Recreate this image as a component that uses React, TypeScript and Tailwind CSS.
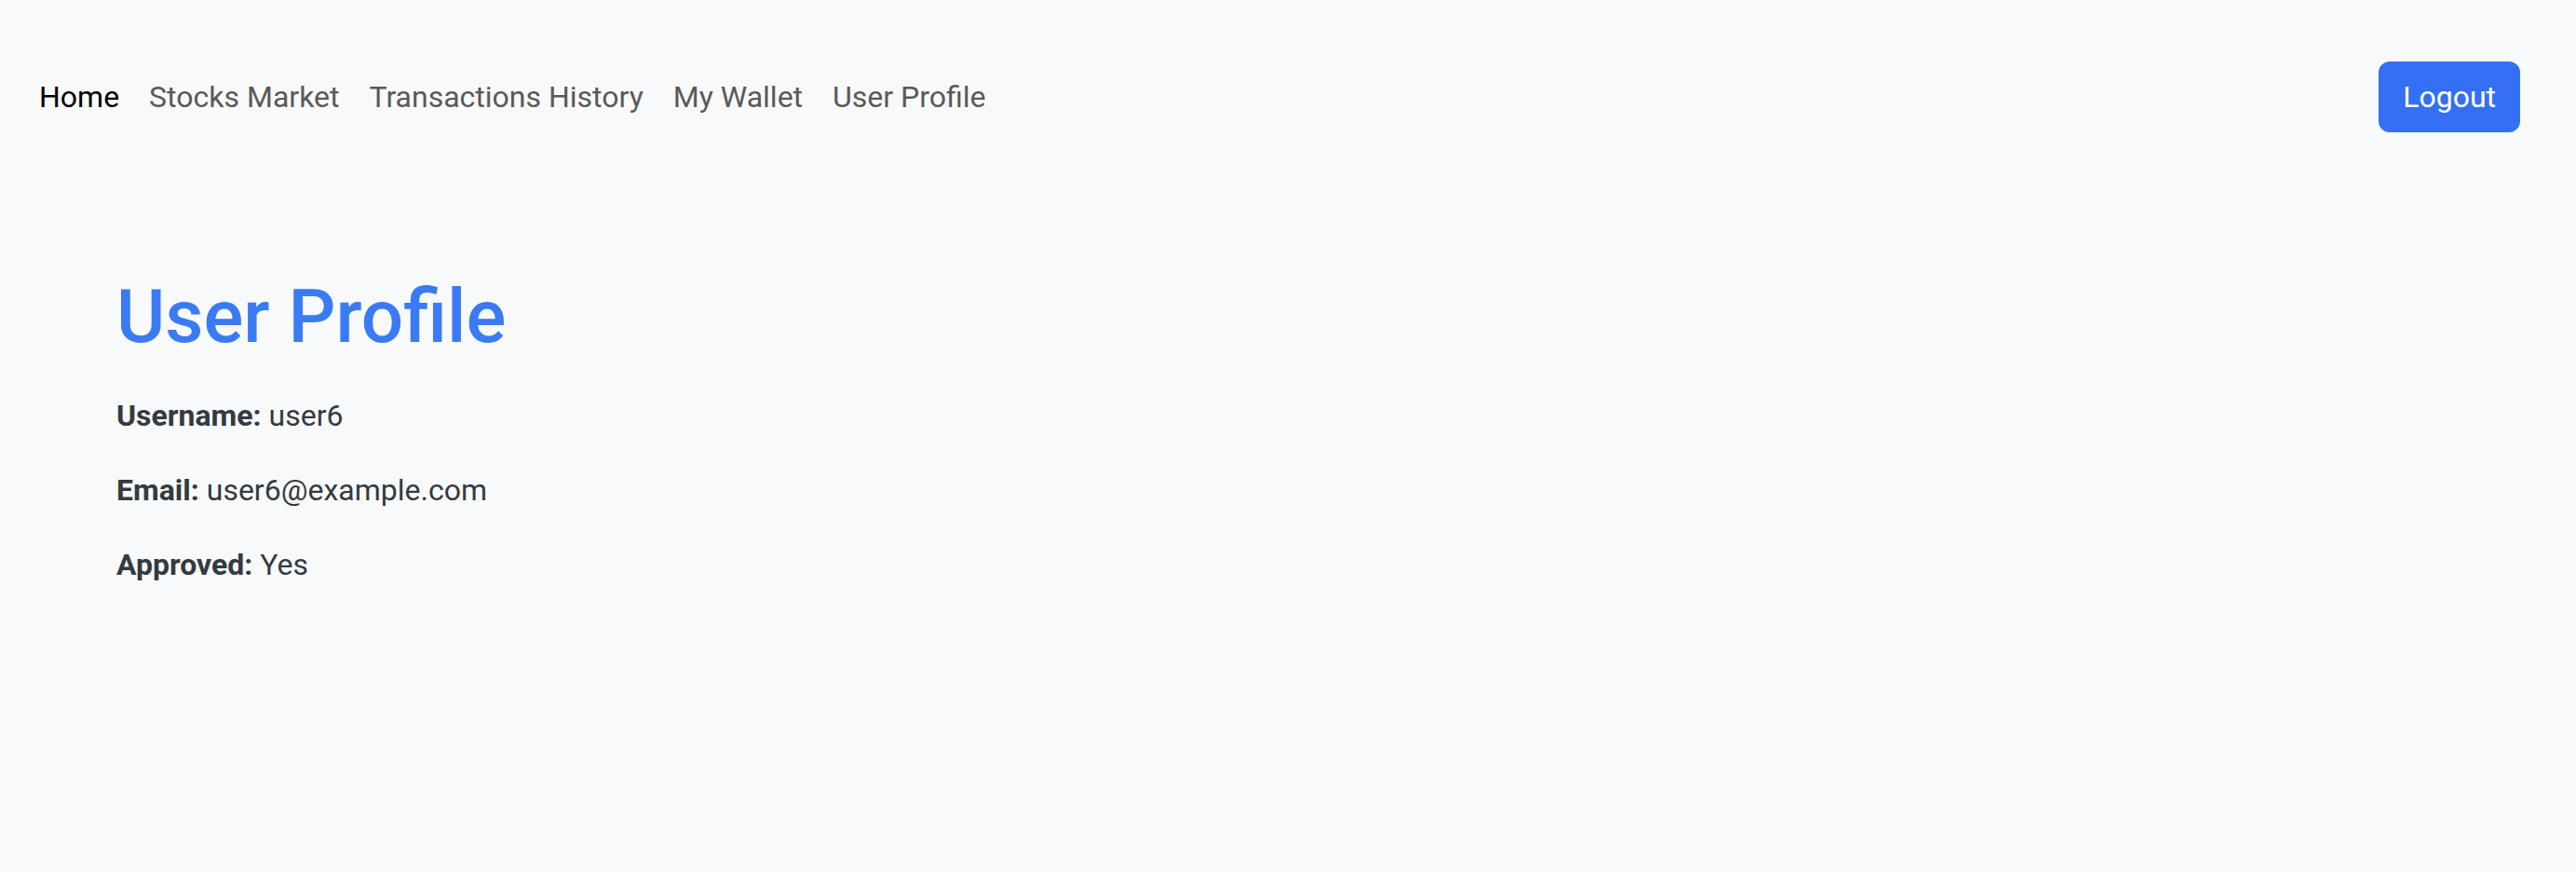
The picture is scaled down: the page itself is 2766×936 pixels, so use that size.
import React from 'react'

const links = [
  { name: 'Home', active: true },
  { name: 'Stocks Market' },
  { name: 'Transactions History' },
  { name: 'My Wallet' },
  { name: 'User Profile' },
]

function Navbar() {
  return (
    <nav className="flex items-center justify-between pt-[64px] pl-[26px] pr-[60px]">
      <ul className="flex items-center">
        {links.map((link) => (
          <li key={link.name}>
            <a
              href="#"
              className={
                link.active
                  ? 'block px-[16px] py-[16px] text-[32px] leading-[48px] text-black'
                  : 'block px-[16px] py-[16px] text-[32px] leading-[48px] text-[#595959]'
              }
            >
              {link.name}
            </a>
          </li>
        ))}
      </ul>
      <button
        type="button"
        className="h-[76px] px-[26px] rounded-[12px] bg-[#3470f4] text-white text-[32px] leading-[48px]"
      >
        Logout
      </button>
    </nav>
  )
}

export default function App() {
  return (
    <div className="min-h-screen bg-[#f8f9fa] text-[#343a40]" style={{ fontFamily: 'Roboto, "Noto Sans", sans-serif' }}>
      <Navbar />

      {/* Profile */}
      <main className="pt-[148px] pl-[125px]">
        <h1 className="text-[80px] leading-[96px] font-medium text-[#3a7bf4] mb-[34px]">User Profile</h1>
        <p className="text-[32px] leading-[48px] mb-[32px]">
          <strong className="font-bold">Username:</strong> user6
        </p>
        <p className="text-[32px] leading-[48px] mb-[32px]">
          <strong className="font-bold">Email:</strong> user6@example.com
        </p>
        <p className="text-[32px] leading-[48px] mb-[32px]">
          <strong className="font-bold">Approved:</strong> Yes
        </p>
      </main>
    </div>
  )
}
